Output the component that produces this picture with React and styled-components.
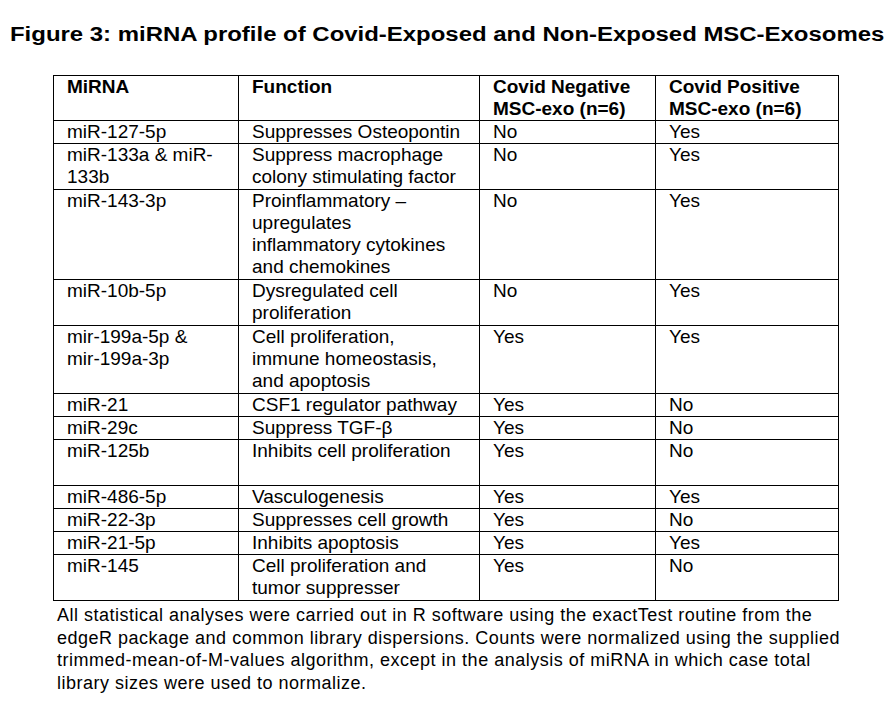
import React from "react";
import styled, { createGlobalStyle } from "styled-components";

const GlobalStyle = createGlobalStyle`
  html, body {
    margin: 0;
    padding: 0;
    background: #ffffff;
  }
  body {
    font-family: "Liberation Sans", Arial, sans-serif;
    color: #000000;
  }
`;

const Page = styled.div`
  padding: 23px 0 0 10px;
`;

// the figure title is set wider than the font's natural width
const Title = styled.h1`
  width: fit-content;
  margin: 0 0 29px 0;
  font-size: 20px;
  line-height: 23px;
  font-weight: bold;
  white-space: nowrap;
  transform: scaleX(1.197);
  transform-origin: 0 0;
`;

const Table = styled.table`
  margin-left: 43px;
  width: 786px;
  border-collapse: collapse;
  table-layout: fixed;
  font-size: 19px;
  line-height: 22px;
`;

const Cell = styled.td`
  border: 1px solid #000000;
  padding: 0 17px 0 13px;
  vertical-align: top;
  font-weight: ${(p) => (p.$head ? "bold" : "normal")};
  height: ${(p) => p.$lines * 22 + (p.$lines > 1 ? 1 : 0)}px;
`;

const HeadCell = styled(Cell).attrs({ as: "th" })`
  text-align: left;
  height: 44px;
`;

const Note = styled.p`
  margin: 3px 0 0 47px;
  width: 800px;
  font-size: 18px;
  line-height: 22.5px;
  letter-spacing: 0.5px;
`;

const rows = [
  ["miR-127-5p", "Suppresses Osteopontin", "No", "Yes", 1],
  ["miR-133a & miR-133b", "Suppress macrophage colony stimulating factor", "No", "Yes", 2],
  ["miR-143-3p", "Proinflammatory – upregulates inflammatory cytokines and chemokines", "No", "Yes", 4],
  ["miR-10b-5p", "Dysregulated cell proliferation", "No", "Yes", 2],
  ["mir-199a-5p & mir-199a-3p", "Cell proliferation, immune homeostasis, and apoptosis", "Yes", "Yes", 3],
  ["miR-21", "CSF1 regulator pathway", "Yes", "No", 1],
  ["miR-29c", "Suppress TGF-β", "Yes", "No", 1],
  ["miR-125b", "Inhibits cell proliferation", "Yes", "No", 2],
  ["miR-486-5p", "Vasculogenesis", "Yes", "Yes", 1],
  ["miR-22-3p", "Suppresses cell growth", "Yes", "No", 1],
  ["miR-21-5p", "Inhibits apoptosis", "Yes", "Yes", 1],
  ["miR-145", "Cell proliferation and tumor suppresser", "Yes", "No", 2],
];

export default function App() {
  return (
    <Page>
      <GlobalStyle />
      <Title>Figure 3: miRNA profile of Covid-Exposed and Non-Exposed MSC-Exosomes</Title>
      <Table>
        <colgroup>
          <col style={{ width: 185 }} />
          <col style={{ width: 241 }} />
          <col style={{ width: 176 }} />
          <col style={{ width: 183 }} />
        </colgroup>
        <thead>
          <tr>
            <HeadCell $head>MiRNA</HeadCell>
            <HeadCell $head>Function</HeadCell>
            <HeadCell $head>Covid Negative MSC-exo (n=6)</HeadCell>
            <HeadCell $head>Covid Positive MSC-exo (n=6)</HeadCell>
          </tr>
        </thead>
        <tbody>
          {rows.map(([mirna, fn, neg, pos, lines]) => (
            <tr key={mirna}>
              <Cell $lines={lines}>{mirna}</Cell>
              <Cell $lines={lines}>{fn}</Cell>
              <Cell $lines={lines}>{neg}</Cell>
              <Cell $lines={lines}>{pos}</Cell>
            </tr>
          ))}
        </tbody>
      </Table>
      <Note>
        All statistical analyses were carried out in R software using the exactTest routine from the
        edgeR package and common library dispersions. Counts were normalized using the supplied
        trimmed-mean-of-M-values algorithm, except in the analysis of miRNA in which case total
        library sizes were used to normalize.
      </Note>
    </Page>
  );
}
